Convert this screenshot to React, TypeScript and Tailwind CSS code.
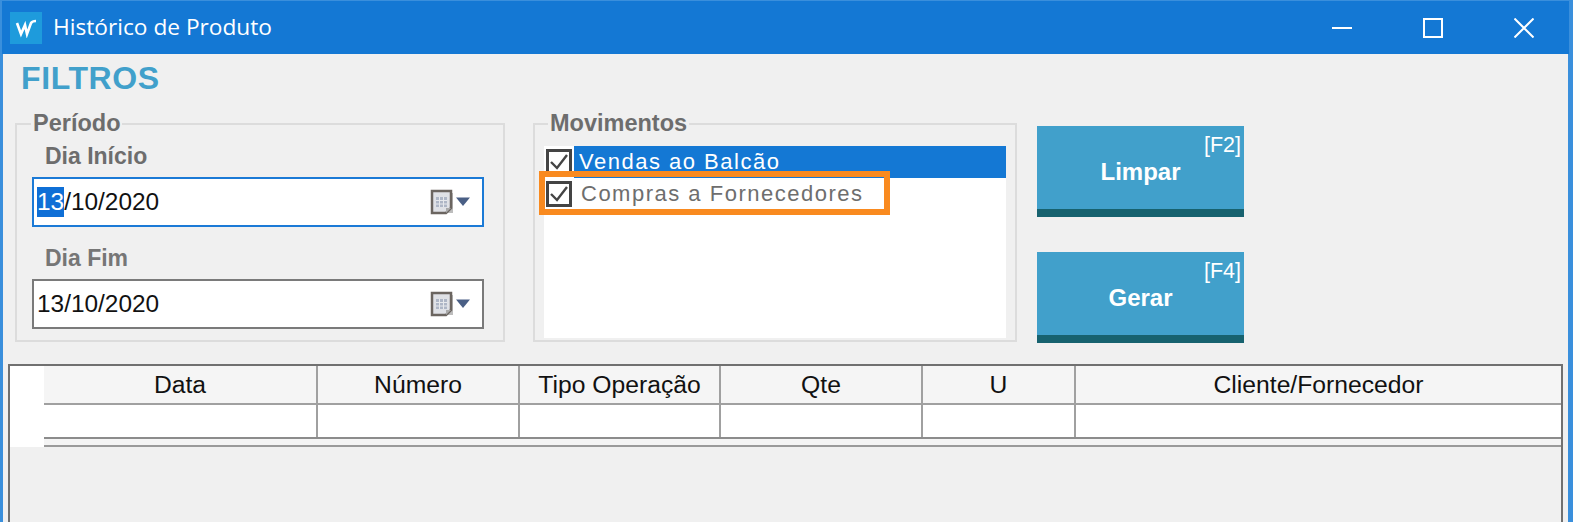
import React from 'react';

const SANS = "font-['Liberation_Sans',Arial,sans-serif]";

const CalendarIcon = () => (
  <svg width="42" height="26" viewBox="0 0 42 26" className="shrink-0">
    <path d="M5 4h19v20H5z" fill="#bdbdbd" />
    <path d="M3 2h19v17l-5 5H3z" fill="#dfe1e6" stroke="#6b6560" strokeWidth="2.500" />
    <path d="M17 24l5-5h-5z" fill="#a9a9a9" />
    <path d="M7 8h11v10H7z" fill="#aeb6c6" />
    <path d="M10.500 8v10M14.500 8v10M7 11.500h11M7 15h11" stroke="#e6e8ec" strokeWidth="1" />
    <path d="M27 8.500h14l-7 8.500z" fill="#4a5f85" />
  </svg>
);

const DateField = ({ focused }: { focused?: boolean }) => (
  <div
    className={`flex items-center justify-between w-[452px] h-[50px] bg-white pl-[3px] pr-[11px] text-[24.400px] text-[#111] ${
      focused ? 'border-2 border-[#1b7ad6]' : 'border-2 border-[#7a7a7a]'
    }`}
  >
    <span className="leading-[30px]">
      {focused ? <span className="inline-block bg-[#0f6fd6] text-white">13</span> : '13'}
      /10/2020
    </span>
    <CalendarIcon />
  </div>
);

const CheckBox = () => (
  <div className="w-[26px] h-[26px] border-[3px] border-[#444] bg-white flex items-center justify-center shrink-0">
    <svg width="20" height="20" viewBox="0 0 20 20">
      <path d="M2 10l6 6L18 3" fill="none" stroke="#444" strokeWidth="2.4" />
    </svg>
  </div>
);

const ActionButton = ({ label, shortcut }: { label: string; shortcut: string }) => (
  <button className="relative w-[207px] h-[91px] bg-[#41a0cb] border-b-[8px] border-[#17626f] text-white">
    <span className="absolute top-[8px] right-[3px] text-[21.500px] leading-[22px]">{shortcut}</span>
    <span className="block pt-[9px] text-[24px] font-bold">{label}</span>
  </button>
);

const columns = ['Data', 'Número', 'Tipo Operação', 'Qte', 'U', 'Cliente/Fornecedor'];

export default function App() {
  return (
    <div className={`${SANS} w-[1573px] h-[522px] overflow-hidden bg-[#3a8fdc] pl-[3px] pr-[5px] pt-[1px] flex flex-col`}>
      {/* Title bar */}
      <div className="h-[53px] -ml-[1px] bg-[#1478d4] flex items-center shrink-0 -mr-[1px]">
        <div className="ml-[8px] w-[32px] h-[32px] bg-[#1e9bdc] flex items-center justify-center">
          <svg width="24" height="20" viewBox="0 0 24 20">
            <path d="M3 5l4 11 4-9 2 9 4-11c1-1.500 3-2 5-2" fill="none" stroke="white" strokeWidth="2.600" />
          </svg>
        </div>
        <span className="ml-[11px] font-['Open_Sans',sans-serif] text-[22.700px] text-white">Histórico de Produto</span>
        <div className="ml-auto flex items-center mr-[35px] gap-[71px]">
          <svg width="20" height="20" viewBox="0 0 20 20"><path d="M0 10h20" stroke="white" strokeWidth="2" /></svg>
          <svg width="20" height="20" viewBox="0 0 20 20"><path d="M1 1h18v18H1z" fill="none" stroke="white" strokeWidth="2" /></svg>
          <svg width="20" height="20" viewBox="0 0 20 20"><path d="M0.500 0.500l19 19M19.500 0.500l-19 19" stroke="white" strokeWidth="2" /></svg>
        </div>
      </div>

      {/* Body */}
      <div className="flex-1 bg-[#f0f0f0] flex flex-col">
        <h1 className="ml-[18px] mt-[5px] h-[51px] text-[32px] leading-[38px] font-bold tracking-[0.6px] text-[#41a0cb]">FILTROS</h1>

        <div className="flex items-start ml-[12px]">
          {/* Período */}
          <fieldset className="w-[490px] h-[232px] border-2 border-[#dcdcdc] pl-[15px]">
            <legend className="-ml-[1px] px-[2px] text-[23.500px] leading-[27px] font-bold text-[#6d6d6d]">Período</legend>
            <div className="ml-[13px] mt-[6px] text-[23px] leading-[26px] font-bold text-[#6d6d6d]">Dia Início</div>
            <div className="mt-[8px]"><DateField focused /></div>
            <div className="ml-[13px] mt-[18px] text-[23px] leading-[26px] font-bold text-[#767676]">Dia Fim</div>
            <div className="mt-[8px]"><DateField /></div>
          </fieldset>

          {/* Movimentos */}
          <fieldset className="relative ml-[28px] w-[482px] h-[232px] border-2 border-[#dcdcdc] px-[9px]">
            <legend className="ml-[4px] px-[2px] text-[23.500px] leading-[27px] font-bold text-[#6d6d6d]">Movimentos</legend>
            <div className="w-[462px] h-[192px] bg-white mt-[9px] text-[22px] tracking-[1.500px]">
              <div className="flex h-[32px] pl-[2px] items-center">
                <CheckBox />
                <div className="flex-1 h-full ml-[2px] bg-[#1478d4] text-white pl-[5px] leading-[32px]">Vendas ao Balcão</div>
              </div>
              <div className="flex h-[32px] pl-[2px] items-center">
                <CheckBox />
                <div className="ml-[9px] text-[#6e6e6e] leading-[32px]">Compras a Fornecedores</div>
              </div>
            </div>
            {/* destaque laranja por cima da lista */}
            <div className="absolute left-[4px] top-[34px] w-[351px] h-[44px] border-[6px] border-[#f98a1f]" />
          </fieldset>

          <div className="ml-[20px] mt-[16px] flex flex-col gap-[35px]">
            <ActionButton label="Limpar" shortcut="[F2]" />
            <ActionButton label="Gerar" shortcut="[F4]" />
          </div>
        </div>

        {/* Grid */}
        <div className="ml-[5px] mt-[21px] w-[1555px] flex-1 border-2 border-b-0 border-[#707070] flex items-start">
          <div className="w-[34px] h-[81px] bg-white shrink-0" />
          <div className="flex-1">
            <div className="grid grid-cols-[274px_202px_201px_202px_153px_1fr] h-[39px] bg-[#f5f5f5] border-b-[2px] border-[#a0a0a0]">
              {columns.map((c, i) => (
                <div
                  key={c}
                  className={`flex items-center justify-center text-[24.700px] text-[#111] ${i < 5 ? 'border-r-2 border-[#a0a0a0]' : ''}`}
                >
                  {c}
                </div>
              ))}
            </div>
            <div className="grid grid-cols-[274px_202px_201px_202px_153px_1fr] h-[34px] bg-white border-b-[2px] border-[#8c8c8c]">
              {columns.map((c, i) => (
                <div key={c} className={i < 5 ? 'border-r-2 border-[#a0a0a0]' : ''} />
              ))}
            </div>
            <div className="h-[8px] bg-[#f4f4f4] border-b-[2px] border-[#9a9a9a]" />
          </div>
        </div>
      </div>
    </div>
  );
}
